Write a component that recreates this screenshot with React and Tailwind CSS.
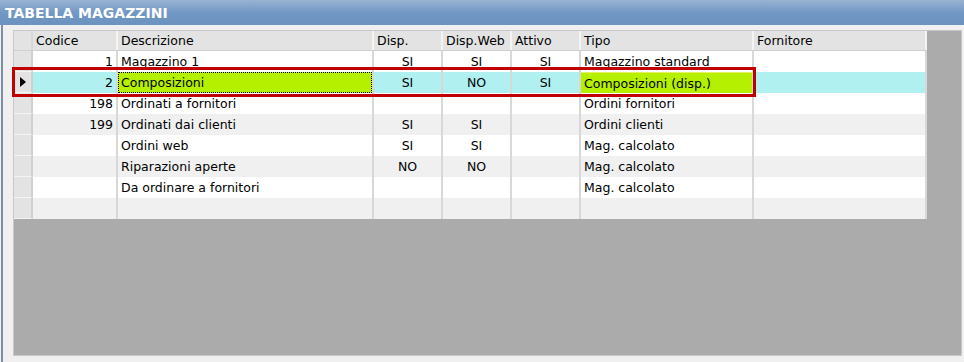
const columns = [
  { key: "codice", label: "Codice", width: "w-[85px]", align: "text-right" },
  { key: "descrizione", label: "Descrizione", width: "w-[256px]", align: "text-left" },
  { key: "disp", label: "Disp.", width: "w-[69px]", align: "text-center" },
  { key: "dispWeb", label: "Disp.Web", width: "w-[69px]", align: "text-center" },
  { key: "attivo", label: "Attivo", width: "w-[69px]", align: "text-center" },
  { key: "tipo", label: "Tipo", width: "w-[173px]", align: "text-left" },
  { key: "fornitore", label: "Fornitore", width: "w-[173px]", align: "text-left" },
];

const rows = [
  { codice: "1", descrizione: "Magazzino 1", disp: "SI", dispWeb: "SI", attivo: "SI", tipo: "Magazzino standard" },
  { codice: "2", descrizione: "Composizioni", disp: "SI", dispWeb: "NO", attivo: "SI", tipo: "Composizioni (disp.)", selected: true },
  { codice: "198", descrizione: "Ordinati a fornitori", tipo: "Ordini fornitori" },
  { codice: "199", descrizione: "Ordinati dai clienti", disp: "SI", dispWeb: "SI", tipo: "Ordini clienti" },
  { descrizione: "Ordini web", disp: "SI", dispWeb: "SI", tipo: "Mag. calcolato" },
  { descrizione: "Riparazioni aperte", disp: "NO", dispWeb: "NO", tipo: "Mag. calcolato" },
  { descrizione: "Da ordinare a fornitori", tipo: "Mag. calcolato" },
  {},
];

function Cell({ col, row }) {
  const lime = row.selected && (col.key === "descrizione" || col.key === "tipo");
  let cls = `${col.width} ${col.align} shrink-0 h-full px-[3px] pt-[2px] flex items-center border-r-2 border-[#d8d8d8] whitespace-nowrap overflow-hidden`;
  if (col.align === "text-right") cls += " justify-end";
  if (col.align === "text-center") cls += " justify-center";
  if (lime) cls += " bg-[#b4f000]";
  if (lime && col.key === "tipo") cls += " border-t border-t-[#e8f060]";
  if (lime && col.key === "descrizione") cls = `${col.width} shrink-0 h-full flex border-r-2 border-[#d8d8d8] bg-[#b4f000] whitespace-nowrap overflow-hidden`;
  return (
    <div className={cls}>
      {lime && col.key === "descrizione" ? (
        <span className="w-full h-full flex items-center pt-[2px] border border-dotted border-black px-[2px]">
          {row[col.key]}
        </span>
      ) : (
        row[col.key] ?? ""
      )}
    </div>
  );
}

export default function App() {
  return (
    <div
      className="w-[964px] h-[362px] bg-[#f0f0f0] flex flex-col text-[12.5px] text-black overflow-hidden"
      style={{ fontFamily: "'DejaVu Sans', Tahoma, sans-serif" }}
    >
      <div className="h-[25px] shrink-0 bg-gradient-to-b from-[#9ab3d3] via-[#7197c5] to-[#6c92c0] flex items-center px-[5px] pt-[1px]">
        <span className="text-white font-bold text-[14px]">TABELLA MAGAZZINI</span>
      </div>
      <div className="flex-1 flex border-l-2 border-[#7d8fa6] ml-[1px] pl-[10px] pr-[2px] pt-[5px] pb-[6px]">
        <div className="flex-1 bg-[#ababab] border border-[#c8c8c8] flex flex-col items-start">
          <div className="flex h-[20px] shrink-0 bg-[#e3e3e3] border-b border-[#d0d0d0]">
            <div className="w-[19px] shrink-0 h-full border-r-2 border-[#d8d8d8]" />
            {columns.map((col) => (
              <div
                key={col.key}
                className={`${col.width} shrink-0 h-full px-[3px] pt-[2px] flex items-center border-r-2 border-[#f4f4f4]`}
              >
                {col.label}
              </div>
            ))}
          </div>
          {rows.map((row, i) => {
            const bg = row.selected ? "bg-[#b0f0f0] relative" : i % 2 === 0 ? "bg-white" : "bg-[#f0f0f0]";
            return (
              <div key={i} className={`flex h-[21px] shrink-0 ${bg}`}>
                <div className="w-[19px] shrink-0 h-full bg-[#e3e3e3] border-r-2 border-b border-[#d0d0d0] border-b-[#f4f4f4] flex items-center justify-center">
                  {row.selected && (
                    <svg width="6" height="10" viewBox="0 0 6 10">
                      <path d="M0 0 L6 5 L0 10 Z" fill="#000" />
                    </svg>
                  )}
                </div>
                {columns.map((col) => (
                  <Cell key={col.key} col={col} row={row} />
                ))}
                {row.selected && (
                  <div className="absolute z-10 left-[-2px] top-[-5px] w-[744px] h-[30px] border-[3px] border-[#c00000] pointer-events-none" />
                )}
              </div>
            );
          })}
        </div>
      </div>
    </div>
  );
}
